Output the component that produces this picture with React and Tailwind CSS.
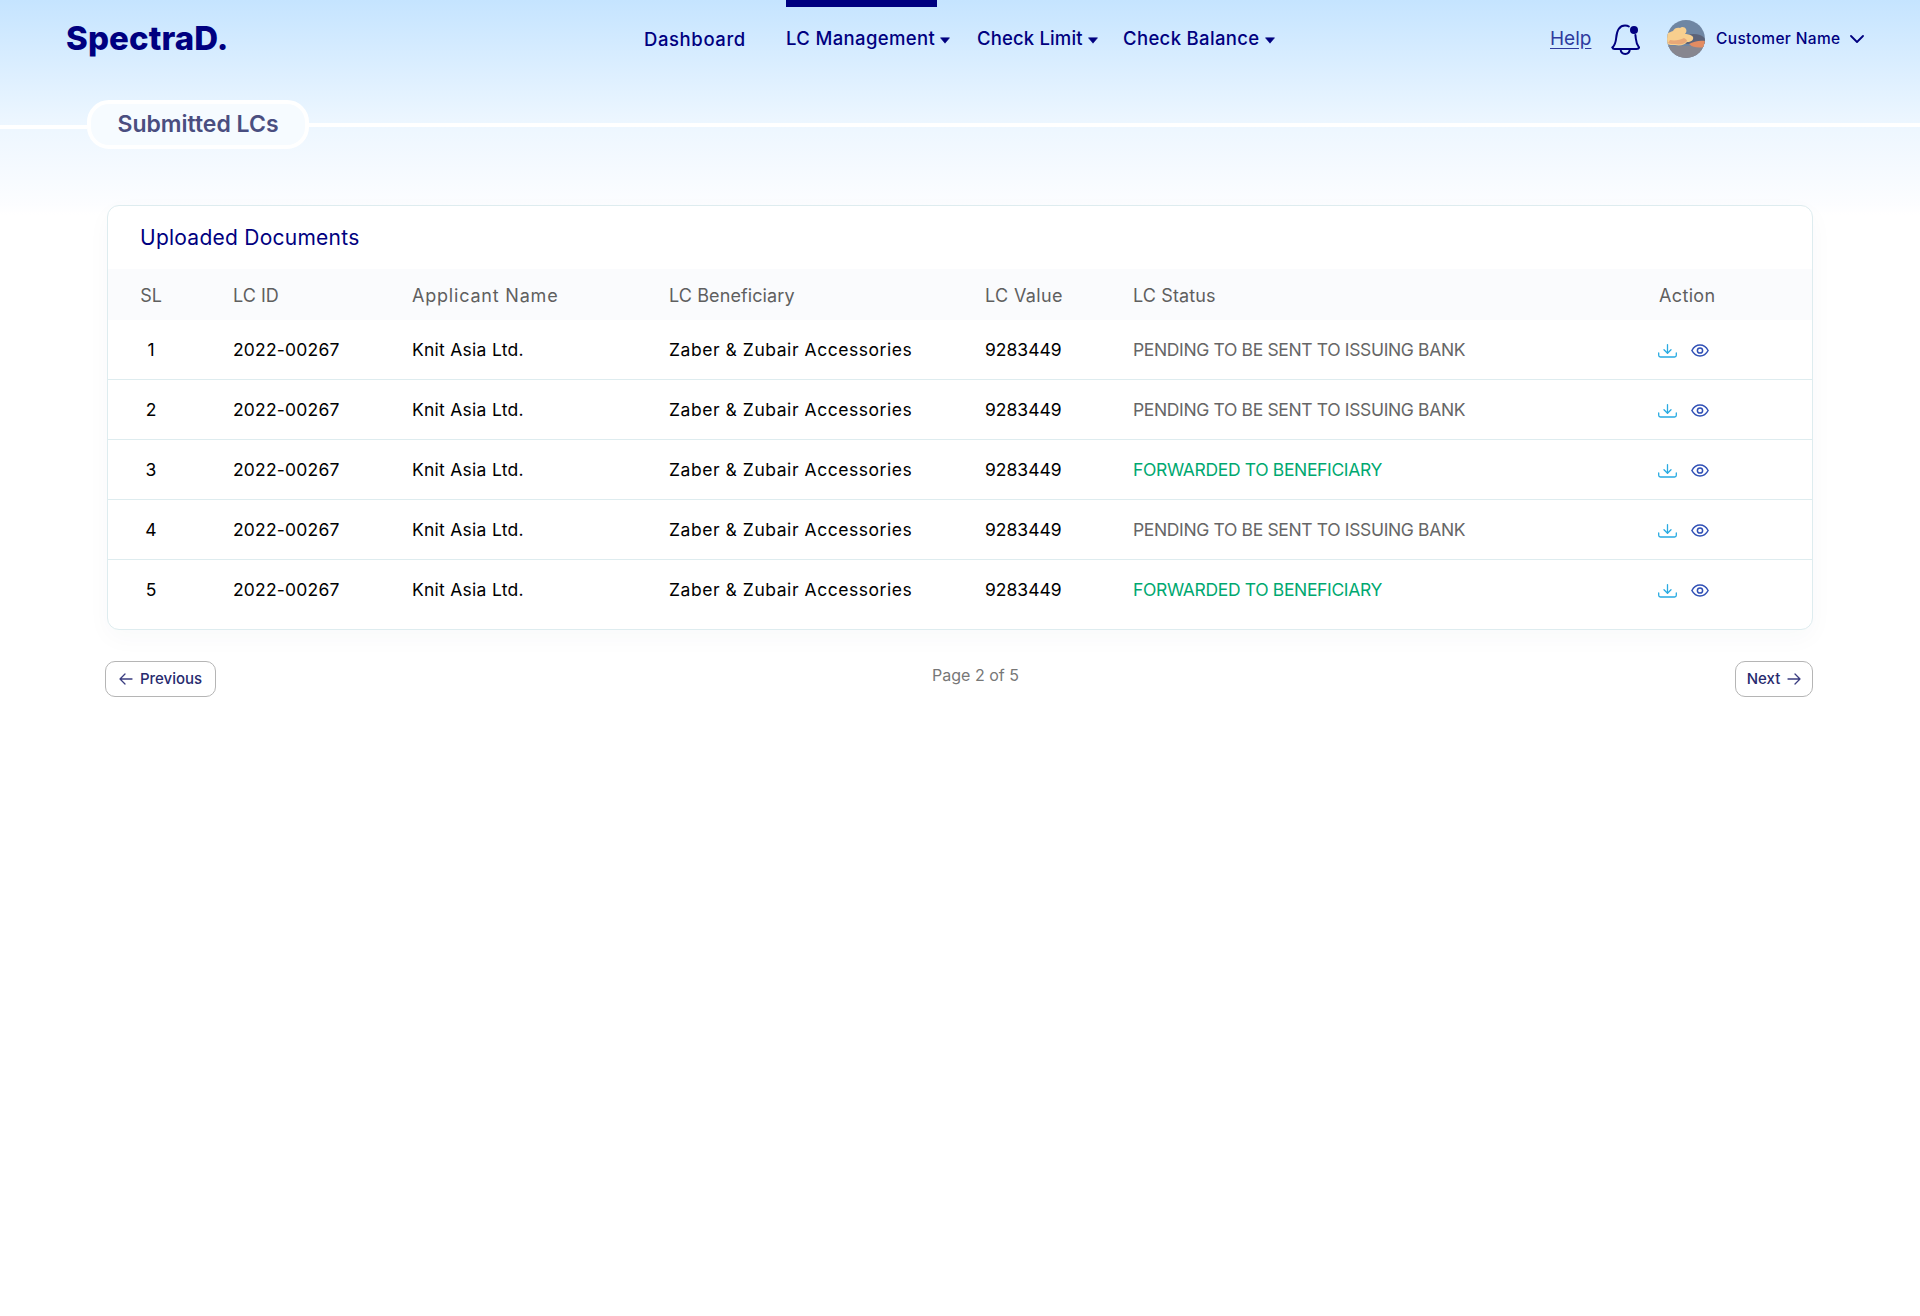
// Submitted LCs page: top nav, title pill, uploaded documents table, pager
import React from 'react';

const FONT = { fontFamily: 'Inter, "Liberation Sans", sans-serif' };

const rows = [
  { sl: 1, status: 'PENDING TO BE SENT TO ISSUING BANK' },
  { sl: 2, status: 'PENDING TO BE SENT TO ISSUING BANK' },
  { sl: 3, status: 'FORWARDED TO BENEFICIARY', done: true },
  { sl: 4, status: 'PENDING TO BE SENT TO ISSUING BANK' },
  { sl: 5, status: 'FORWARDED TO BENEFICIARY', done: true },
];

function Caret() {
  return (
    <svg width="10" height="7" viewBox="0 0 10 7" className="ml-[5px] mt-[2px] shrink-0">
      <path d="M0.5 0.8h9L5 6.2z" fill="#000080" stroke="#000080" strokeWidth="0.6" strokeLinejoin="round" />
    </svg>
  );
}

function Bell() {
  return (
    <svg width="29" height="31" viewBox="0 0 29 31" fill="none" stroke="#000080" strokeWidth="2" className="shrink-0">
      <path d="M1.5 23.5c2.6-2.6 3.2-5 3.6-9C5.6 8.5 7.3 1.5 14 1.5c1.6 0 2.9.3 3.9 1" strokeLinecap="round" />
      <path d="M24.4 11c.2 1.2.3 2.3.4 3.5.4 4 1.3 6.600 3.200 9" strokeLinecap="round" />
      <path d="M1.500 23.500c.2 1 .8 1.500 2 1.500h22c1.300 0 2.300-.5 2.500-1.500" strokeLinecap="round" />
      <path d="M9.500 25c.3 3 2.200 5 4.700 5s4.400-2 4.700-5" />
      <circle cx="23" cy="6" r="4" fill="#000080" stroke="none" />
    </svg>
  );
}

function Avatar() {
  return (
    <svg width="38" height="38" viewBox="0 0 38 38" className="shrink-0 rounded-full">
      <rect width="38" height="38" fill="#6f86a3" />
      <rect y="26" width="38" height="12" fill="#87868f" />
      <path d="M14 18c5-4 13-5 19-3 3 1 5 3 5 5v4H16z" fill="#5c6379" />
      <path d="M22 24c4-2 10-4 16-3v6c-6 1-12 1-16-3z" fill="#e38c62" />
      <path d="M0 14c2-2 4-2 6-3 1-3 5-4 7-3 2-2 5-1 6 1 1 2 0 4-1 5 3 0 7 1 8 3 1 3-2 5-6 5-2 3-7 4-12 3-3 0-6 0-8-1z" fill="#f8cf8e" />
      <path d="M3 20c5 1 10 0 14-2 2 1 3 2 3 3-2 3-7 4-12 3-3 0-5 0-7-1z" fill="#e9a878" />
    </svg>
  );
}

function DownloadIcon() {
  return (
    <svg width="19" height="14" viewBox="0 0 19 14" fill="none" stroke="#29abe2" strokeWidth="1.300" strokeLinecap="round" strokeLinejoin="round" className="-ml-px shrink-0">
      <path d="M9.500 0.700v8.300" />
      <path d="M6 5.800l3.500 3.400 3.500-3.400" />
      <path d="M0.700 9v2.200c0 1 .6 1.800 1.700 1.800h14.200c1.100 0 1.700-.8 1.700-1.800V9" />
    </svg>
  );
}

function EyeIcon() {
  return (
    <svg width="18" height="13" viewBox="0 0 18 13" fill="none" stroke="#2f4fb5" strokeWidth="1.500" className="shrink-0">
      <path d="M0.900 6.500C2.800 2.900 5.700 1 9 1s6.200 1.900 8.100 5.500C15.200 10.100 12.300 12 9 12S2.800 10.100.9 6.500z" />
      <circle cx="9" cy="6.500" r="2.600" />
    </svg>
  );
}

function Arrow({ flip }) {
  return (
    <svg width="14" height="12" viewBox="0 0 14 12" fill="none" stroke="#3a3d80" strokeWidth="1.300" strokeLinecap="round" strokeLinejoin="round" className={flip ? 'rotate-180 shrink-0' : 'shrink-0'}>
      <path d="M1 6h12M8 1l5 5-5 5" />
    </svg>
  );
}

export default function App() {
  return (
    <div style={FONT} className="min-h-[1316px] bg-[linear-gradient(180deg,#c5e4ff_0px,#ecf6ff_120px,#fcfdff_205px,#ffffff_215px)]">
      <header className="flex h-[78px] items-stretch text-[#000080]">
        <div className="flex w-[644px] shrink-0 items-center pl-[66px] text-[33px] font-extrabold tracking-[0.1px]">SpectraD.</div>
        <nav className="flex items-stretch text-[18.500px] font-medium tracking-[0.35px]">
          <a className="mt-px flex w-[142px] items-center tracking-[0.6px]">Dashboard</a>
          <a className="relative flex w-[191px] items-center">
            <span className="absolute left-0 top-0 h-[7px] w-[151px] bg-[#000080]"></span>
            LC Management
            <Caret />
          </a>
          <a className="flex w-[146px] items-center tracking-[0.15px]">
            Check Limit
            <Caret />
          </a>
          <a className="flex w-[427px] items-center">
            Check Balance
            <Caret />
          </a>
        </nav>
        <div className="flex items-center">
          <a className="w-[61px] text-[19px] text-[#2e3a9e] underline underline-offset-[3px]">Help</a>
          <Bell />
          <div className="ml-[27px]"><Avatar /></div>
          <span className="ml-[11px] w-[134px] text-[15.500px] font-medium tracking-[0.35px]">Customer Name</span>
          <svg width="14" height="9" viewBox="0 0 14 9" fill="none" stroke="#000080" strokeWidth="1.800" strokeLinecap="round" strokeLinejoin="round">
            <path d="M1 1l6 6 6-6" />
          </svg>
        </div>
      </header>

      <div className="mt-[22px] flex h-[49px] items-center">
        <div className="mt-1 h-1 w-[87px] bg-white"></div>
        <div className="flex h-[49px] w-[222px] items-center justify-center rounded-[22px] border-4 border-white bg-[#f6fbff] text-[23px] font-semibold text-[#4a4e80]">
          Submitted LCs
        </div>
        <div className="h-1 flex-1 bg-white"></div>
      </div>

      <div className="ml-[107px] mt-[56px] w-[1706px] overflow-hidden rounded-[12px] border border-[#deecef] bg-white shadow-[0_8px_24px_rgba(20,60,100,0.03)]">
        <div className="flex h-[63px] items-center pl-[32px] text-[21px] tracking-[0.25px] text-[#000080]">Uploaded Documents</div>
        <table className="w-full table-fixed border-separate border-spacing-0 text-left text-[17.500px]">
          <colgroup>
            <col className="w-[125px]" />
            <col className="w-[179px]" />
            <col className="w-[257px]" />
            <col className="w-[316px]" />
            <col className="w-[148px]" />
            <col className="w-[526px]" />
            <col />
          </colgroup>
          <thead>
            <tr className="h-[51px] bg-[#fafbfd] text-[18px] text-[#5f5f5f]">
              <th className="pr-[39px] pt-[2px] text-center font-normal">SL</th>
              <th className="pt-[2px] font-normal">LC ID</th>
              <th className="pt-[2px] font-normal tracking-[0.8px]">Applicant Name</th>
              <th className="pt-[2px] font-normal tracking-[0.1px]">LC Beneficiary</th>
              <th className="pt-[2px] font-normal tracking-[0.35px]">LC Value</th>
              <th className="pt-[2px] font-normal tracking-[0.13px]">LC Status</th>
              <th className="pt-[2px] font-normal tracking-[0.35px]">Action</th>
            </tr>
          </thead>
          <tbody className="text-black">
            {rows.map((row, i) => {
              const last = i === rows.length - 1;
              const pad = last ? 'pb-[8px]' : 'pt-[2px]';
              return (
                <tr key={row.sl} className={last ? 'h-[69px]' : 'h-[60px] *:border-b *:border-[#deecef]'}>
                  <td className={'pr-[39px] text-center ' + pad}>{row.sl}</td>
                  <td className={'tracking-[0.2px] ' + pad}>2022-00267</td>
                  <td className={'tracking-[0.26px] ' + pad}>Knit Asia Ltd.</td>
                  <td className={'tracking-[0.55px] ' + pad}>Zaber &amp; Zubair Accessories</td>
                  <td className={pad}>9283449</td>
                  <td className={(row.done ? 'text-[#00a870] ' : 'text-[#666666] ') + 'tracking-[-0.35px] ' + pad}>{row.status}</td>
                  <td className={pad}>
                    <div className="flex items-center gap-[14px]">
                      <DownloadIcon />
                      <EyeIcon />
                    </div>
                  </td>
                </tr>
              );
            })}
          </tbody>
        </table>
      </div>

      <div className="ml-[105px] mt-[31px] flex w-[1708px] items-start justify-between">
        <button className="flex h-[36px] w-[111px] items-center justify-center gap-[7px] rounded-[10px] border border-[#b5b5b5] text-[15px] font-medium text-[#272a6e]">
          <Arrow flip />
          Previous
        </button>
        <span className="mt-[2px] text-[16px] text-[#777777]">Page 2 of 5</span>
        <button className="flex h-[36px] w-[78px] items-center justify-center gap-[7px] rounded-[10px] border border-[#b5b5b5] text-[15px] font-medium text-[#272a6e]">
          Next
          <Arrow />
        </button>
      </div>
    </div>
  );
}
